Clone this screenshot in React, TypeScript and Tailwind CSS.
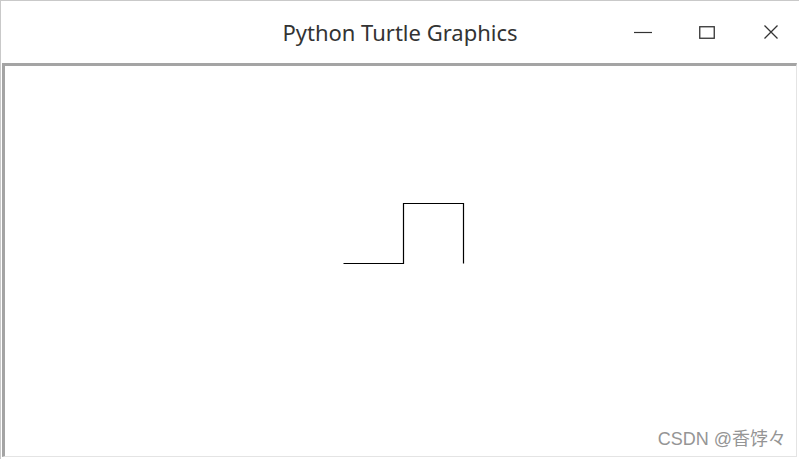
function TitleBar() {
	return (
		<div className="relative flex h-[62px] shrink-0 items-center justify-center bg-white">
			<span className="text-[22px] text-[#333333] [font-family:'Noto_Sans',sans-serif]">
				Python Turtle Graphics
			</span>
			<div className="absolute right-[-4px] top-0 flex h-full items-center">
				<button className="flex h-full w-[64px] items-center justify-center">
					<svg width="18" height="14" viewBox="0 0 18 14">
						<line x1="0" y1="7.5" x2="18" y2="7.5" stroke="#333" strokeWidth="1.2" />
					</svg>
				</button>
				<button className="flex h-full w-[64px] items-center justify-center">
					<svg width="16" height="13" viewBox="0 0 16 13">
						<rect x="0.75" y="0.75" width="14.5" height="11.5" fill="none" stroke="#333" strokeWidth="1.3" />
					</svg>
				</button>
				<button className="flex h-full w-[64px] items-center justify-center">
					<svg width="14" height="14" viewBox="0 0 14 14">
						<path d="M0.5 0.5 L13.5 13.5 M13.5 0.5 L0.5 13.5" stroke="#333" strokeWidth="1.3" />
					</svg>
				</button>
			</div>
		</div>
	);
}

function TurtleCanvas() {
	// turtle path in canvas coords (canvas origin at page x=4, y=65)
	return (
		<div className="relative flex-1 bg-white">
			<svg className="absolute left-0 top-0" width="792" height="392">
				<polyline
					points="338.5,197.5 398.5,197.5 398.5,137.5 458.5,137.5 458.5,197.5"
					fill="none"
					stroke="#000"
					strokeWidth="1.2"
				/>
			</svg>
			<span className="absolute bottom-[3px] right-[10px] text-[18px] text-[#959595] [font-family:'Liberation_Sans','Noto_Sans_CJK_SC',sans-serif]">
				CSDN @香饽々
			</span>
		</div>
	);
}

export default function App() {
	return (
		<div className="flex h-[459px] w-[799px] flex-col overflow-hidden border-l border-t border-[#c9c9c9] bg-white">
			<TitleBar />
			<div className="ml-[1px] mr-[2px] mb-[2px] flex flex-1 flex-col border-b border-l-[3px] border-r border-t-[3px] border-b-[#e4e4e4] border-l-[#a4a4a4] border-r-[#e4e4e4] border-t-[#a4a4a4]">
				<TurtleCanvas />
			</div>
		</div>
	);
}
